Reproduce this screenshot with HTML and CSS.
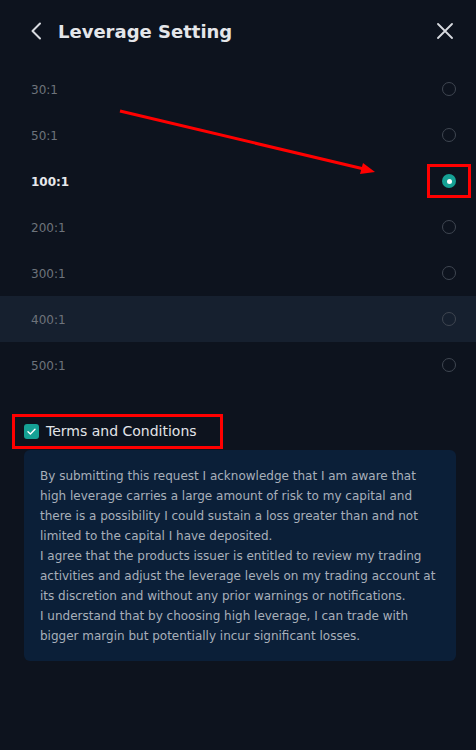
FILE: index.html
```html
<!DOCTYPE html>
<html>
<head>
<meta charset="utf-8">
<link rel="stylesheet" href="styles.css">
</head>
<body>
<div class="page">
  <header class="header">
    <svg class="back" width="12" height="18" viewBox="0 0 12 18"><path d="M10 1.5 L2.5 9 L10 16.5" fill="none" stroke="#d7dadf" stroke-width="2" stroke-linecap="round" stroke-linejoin="round"/></svg>
    <h1 class="title">Leverage Setting</h1>
    <svg class="close" width="16" height="16" viewBox="0 0 16 16"><path d="M1 1 L15 15 M15 1 L1 15" fill="none" stroke="#d7dadf" stroke-width="1.8" stroke-linecap="round"/></svg>
  </header>
  <ul class="list">
    <li class="row"><span class="label">30:1</span><span class="radio"></span></li>
    <li class="row"><span class="label">50:1</span><span class="radio"></span></li>
    <li class="row selected"><span class="label">100:1</span><span class="radio on"></span></li>
    <li class="row"><span class="label">200:1</span><span class="radio"></span></li>
    <li class="row"><span class="label">300:1</span><span class="radio"></span></li>
    <li class="row hover"><span class="label">400:1</span><span class="radio"></span></li>
    <li class="row"><span class="label">500:1</span><span class="radio"></span></li>
  </ul>
  <div class="terms">
    <span class="check"><svg width="15" height="15" viewBox="0 0 15 15"><path d="M4 7.8 L6.4 10 L11 5.2" fill="none" stroke="#ffffff" stroke-width="1.4" stroke-linecap="round" stroke-linejoin="round"/></svg></span>
    <span class="terms-label">Terms and Conditions</span>
  </div>
  <div class="info">
    <p>By submitting this request I acknowledge that I am aware that high leverage carries a large amount of risk to my capital and there is a possibility I could sustain a loss greater than and not limited to the capital I have deposited.</p>
    <p>I agree that the products issuer is entitled to review my trading activities and adjust the leverage levels on my trading account at its discretion and without any prior warnings or notifications.</p>
    <p>I understand that by choosing high leverage, I can trade with bigger margin but potentially incur significant losses.</p>
  </div>

  <svg class="arrow" width="476" height="750" viewBox="0 0 476 750"><line x1="120" y1="111" x2="364" y2="169" stroke="#ff0000" stroke-width="3"/><polygon points="375,172 360,174 363,163" fill="#ff0000"/></svg>
  <div class="mark mark-radio"></div>
  <div class="mark mark-terms"></div>
</div>
</body>
</html>
```
FILE: styles.css
```css
* { box-sizing: border-box; }
html, body { margin: 0; padding: 0; background: #0d131e; }
body { font-family: "DejaVu Sans", "Open Sans", sans-serif; }
.page { position: relative; width: 476px; height: 750px; background: #0d131e; }

.header { height: 62px; display: flex; align-items: center; padding: 0 23px 0 30px; }
.back { flex: none; }
.title { margin: 0 0 0 16px; flex: 1; font-size: 18px; font-weight: 700; color: #e4e6ea; letter-spacing: 0; }
.close { flex: none; }

.list { list-style: none; margin: 4px 0 0; padding: 0; }
.row { height: 46px; display: flex; align-items: center; justify-content: space-between; padding: 0 20px 0 31px; }
.row.hover { background: #16202f; }
.label { font-size: 12px; color: #6e737b; padding-top: 1px; }
.row.selected .label { color: #e6e8eb; font-weight: 700; }
.radio { width: 14px; height: 14px; border-radius: 50%; border: 1.5px solid #3f4651; }
.radio.on { border: none; background: #15a195; position: relative; }
.radio.on::after { content: ""; position: absolute; left: 4.5px; top: 4.5px; width: 5px; height: 5px; border-radius: 50%; background: #ffffff; }

.terms { margin: 28px 0 0; height: 30px; display: flex; align-items: center; padding-left: 24px; }
.check { width: 15px; height: 15px; border-radius: 3px; background: #15a195; display: flex; }
.terms-label { margin-left: 7px; font-size: 14px; color: #e2e4e8; }

.info { margin: 4px 20px 0 24px; background: #0b1f38; border-radius: 6px; padding: 16px 16px 15px 16px; }
.info p { margin: 0; font-size: 12px; line-height: 20px; color: #a8afba; }

.arrow { position: absolute; left: 0; top: 0; pointer-events: none; }
.mark { position: absolute; border: 3px solid #ff0000; }
.mark-radio { left: 427px; top: 164px; width: 44px; height: 34px; }
.mark-terms { left: 12px; top: 414px; width: 211px; height: 35px; }
```
